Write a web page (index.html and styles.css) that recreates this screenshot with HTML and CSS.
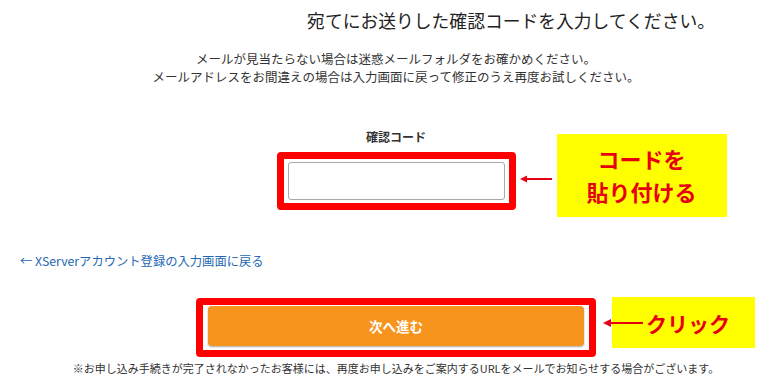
FILE: index.html
```html
<!DOCTYPE html>
<html>
<head>
    <title>確認コードの入力</title>
    <link rel="stylesheet" href="styles.css">
</head>
<body>
    <h1 class="lead">宛てにお送りした確認コードを入力してください。</h1>

    <div class="notice">
        <p>メールが見当たらない場合は迷惑メールフォルダをお確かめください。</p>
        <p>メールアドレスをお間違えの場合は入力画面に戻って修正のうえ再度お試しください。</p>
    </div>

    <div class="row code-row">
        <div class="field">
            <label class="field-label" for="code">確認コード</label>
            <div class="frame frame-code">
                <input id="code" class="code-input" type="text">
            </div>
        </div>
        <div class="aside aside-code">
            <svg class="arrow arrow-short" viewBox="0 0 32 8" width="32" height="8">
                <path d="M5 4H32" stroke="#e60012" stroke-width="2"/>
                <polygon points="0,4 7,0.5 7,7.5" fill="#e60012"/>
            </svg>
            <div class="callout callout-paste">コードを<br>貼り付ける</div>
        </div>
    </div>

    <a class="back-link" href="#">←&nbsp;XServerアカウント登録の入力画面に戻る</a>

    <div class="row submit-row">
        <span></span>
        <div class="frame frame-submit">
            <button class="next-button">次へ進む</button>
        </div>
        <div class="aside aside-submit">
            <div class="callout callout-click">
                <svg class="arrow arrow-long" viewBox="0 0 40 10" width="40" height="10">
                    <path d="M6 5H40" stroke="#e60012" stroke-width="2"/>
                    <polygon points="0,5 8,1 8,9" fill="#e60012"/>
                </svg>
                <span>クリック</span>
            </div>
        </div>
    </div>

    <p class="note">※お申し込み手続きが完了されなかったお客様には、再度お申し込みをご案内するURLをメールでお知らせする場合がございます。</p>
</body>
</html>
```

FILE: styles.css
```css
body {
    font-family: "Noto Sans CJK JP", "Noto Sans", sans-serif;
    margin: 0;
    background: #ffffff;
    color: #333333;
    width: 759px;
    height: 391px;
    overflow: hidden;
}

.lead {
    margin: 8px 44px 0 0;
    font-size: 17.8px;
    line-height: 24px;
    font-weight: normal;
    text-align: right;
    color: #222222;
}

.notice {
    margin-top: 18px;
    padding-left: 33px;
    text-align: center;
    font-size: 12.5px;
    line-height: 18px;
}

.notice p {
    margin: 0;
}

.row {
    display: grid;
    grid-template-columns: 1fr auto 1fr;
    align-items: start;
    padding-left: 33px;
}

.code-row {
    margin-top: 43px;
}

.field {
    grid-column: 2;
    display: flex;
    flex-direction: column;
    align-items: center;
}

.field-label {
    font-size: 12px;
    line-height: 16px;
    font-weight: bold;
    margin-bottom: 7px;
}

.frame {
    border: 7px solid #ff0000;
    border-radius: 4px;
}

.frame-code {
    padding: 3px 4px;
}

.code-input {
    display: block;
    width: 217px;
    height: 38px;
    box-sizing: border-box;
    border: 1px solid #a9a9a9;
    border-radius: 3px;
    background: #fff;
}

.aside {
    display: flex;
    align-items: flex-start;
}

.aside-code {
    margin-top: 5px;
    margin-left: 4px;
}

.arrow-short {
    margin-top: 41px;
    margin-right: 5px;
}

.callout {
    background: #ffff00;
    color: #e60012;
    font-weight: bold;
}

.callout-paste {
    width: 170px;
    height: 83px;
    box-sizing: border-box;
    padding-top: 8px;
    text-align: center;
    font-size: 22px;
    line-height: 33px;
}

.back-link {
    display: block;
    margin: 36px 0 0 20px;
    font-size: 12.3px;
    line-height: 16px;
    color: #2467b3;
    text-decoration: none;
}

.submit-row {
    margin-top: 29px;
}

.frame-submit {
    padding: 1px 5px 4px;
}

.next-button {
    display: block;
    width: 376px;
    height: 40px;
    border: none;
    border-radius: 4px;
    background: #f7941e;
    color: #ffffff;
    font-family: inherit;
    font-size: 13.5px;
    font-weight: bold;
    box-shadow: 0 1px 2px rgba(0, 0, 0, 0.35);
}

.aside-submit {
    margin-top: -1px;
    margin-left: 16px;
}

.callout-click {
    display: flex;
    align-items: center;
    width: 143px;
    height: 51px;
    font-size: 21px;
}

.arrow-long {
    margin-left: -9px;
    margin-right: 3px;
}

.note {
    margin: 4px 0 0;
    padding-left: 33px;
    text-align: center;
    font-size: 11px;
    line-height: 14px;
}
```
